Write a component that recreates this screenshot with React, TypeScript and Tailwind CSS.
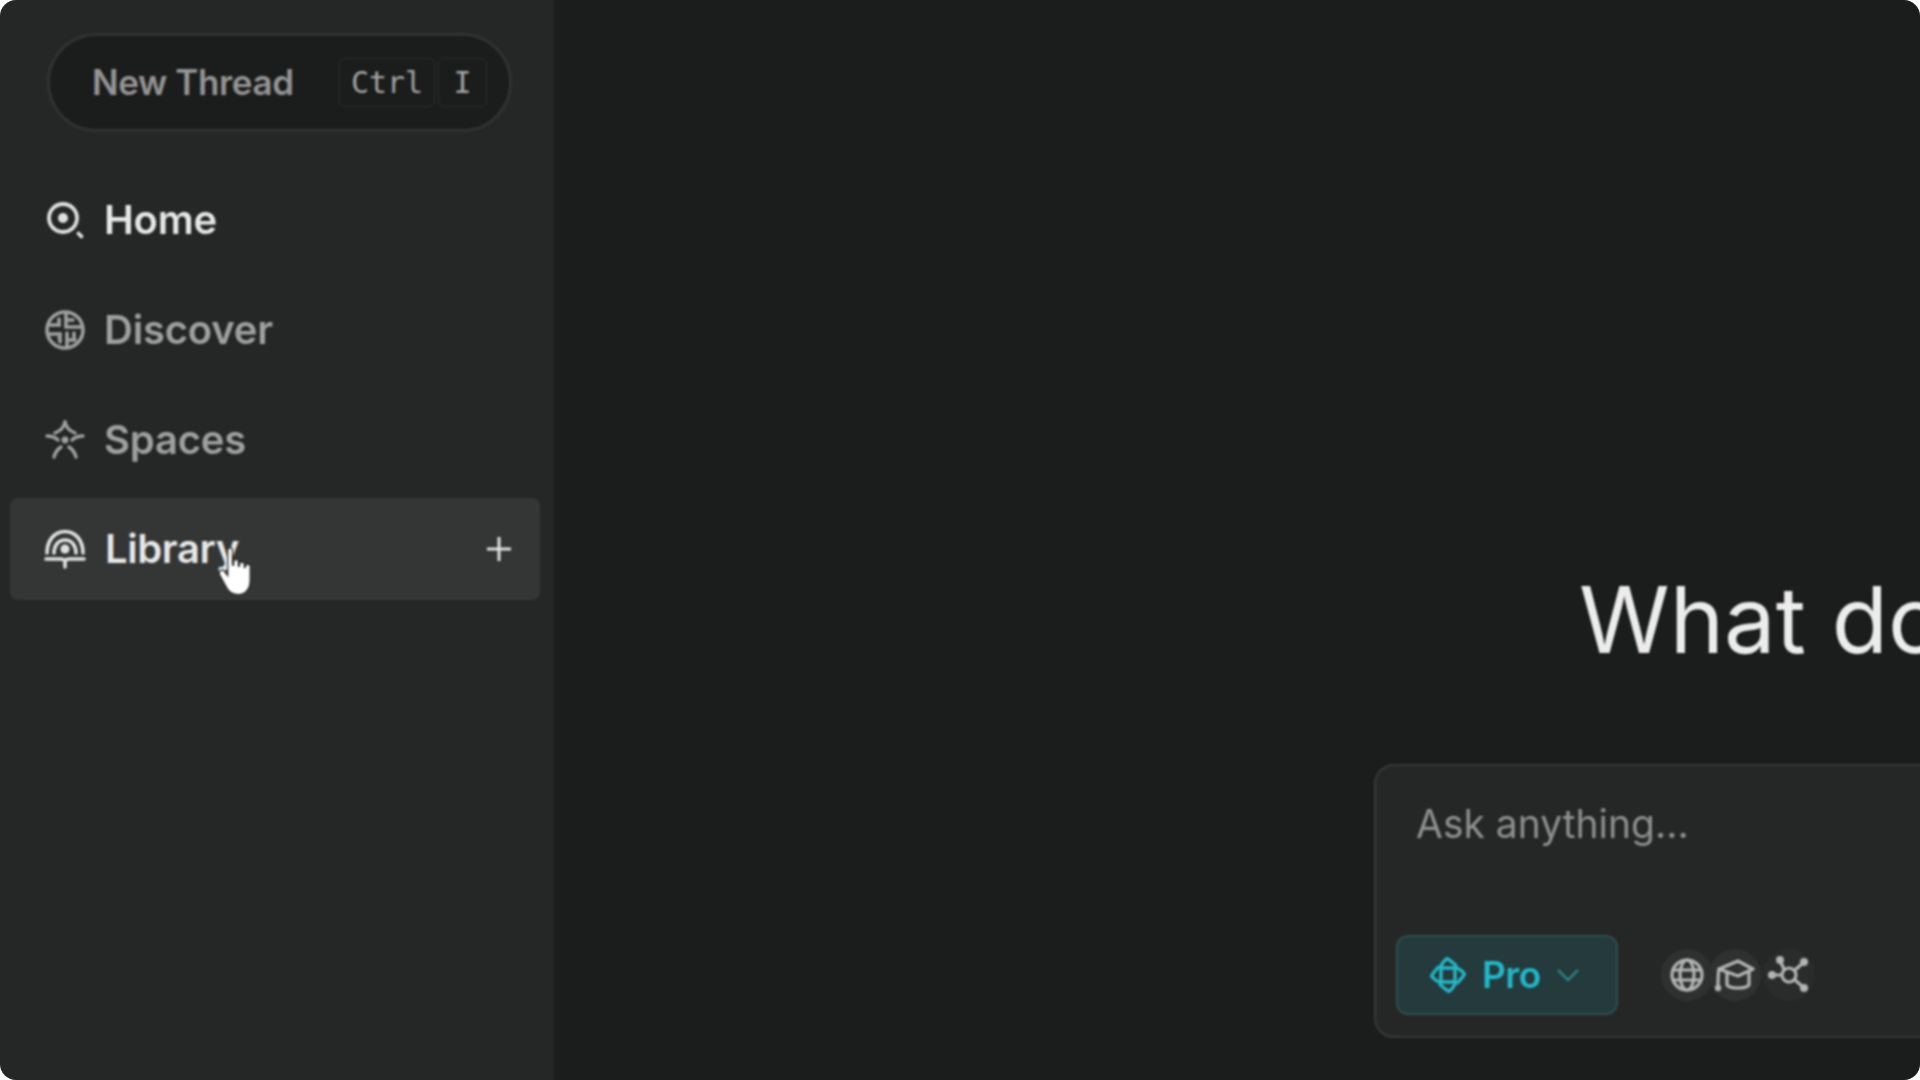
const inter = "font-['Inter',sans-serif]";

function HomeIcon() {
  return (
    <svg viewBox="0 0 40 40" className="w-10 h-10" fill="none" stroke="currentColor" strokeWidth="3.8" strokeLinecap="round">
      <circle cx="18" cy="18" r="14" />
      <circle cx="18" cy="18" r="5" fill="currentColor" stroke="none" />
      <path d="M33.5 33.5l3 3" />
    </svg>
  );
}

function DiscoverIcon() {
  return (
    <svg viewBox="0 0 40 40" className="w-10 h-10" fill="none" stroke="currentColor" strokeWidth="3.6" strokeLinecap="round">
      <circle cx="20" cy="20" r="18" />
      <path d="M4 15h10V9M21 3v14h15M21 10h7M4 24h11v8M15 28h-1M22 23v14M22 30h8M29 23v5" />
    </svg>
  );
}

function SpacesIcon() {
  return (
    <svg viewBox="0 0 40 40" className="w-10 h-10" fill="none" stroke="currentColor" strokeWidth="3.4" strokeLinecap="round">
      <path d="M20 2c-1 5-5 9-10 11" />
      <path d="M20 2c1 5 5 9 10 11" />
      <path d="M2 16c4 0 8 1 11 4" />
      <path d="M38 16c-4 0-8 1-11 4" />
      <path d="M9 37c1-4 4-8 7-10" />
      <path d="M31 37c-1-4-4-8-7-10" />
      <circle cx="20" cy="20" r="3.4" fill="currentColor" stroke="none" />
    </svg>
  );
}

function LibraryIcon() {
  return (
    <svg viewBox="0 0 44 40" className="w-11 h-10" fill="none" stroke="currentColor" strokeWidth="3.6" strokeLinecap="round">
      <path d="M4 24C4 12 11 2.500 22 2.500S40 12 40 24" />
      <path d="M11 24c0-7 4-13 11-13s11 6 11 13" />
      <circle cx="22" cy="20" r="4.500" fill="currentColor" stroke="none" />
      <path d="M3 30h14c3 0 5 1 5 3 0-2 2-3 5-3h14M22 33v5" />
    </svg>
  );
}

function ProIcon() {
  const petal = "M13 26V12.500C13 9 16 6 19 3.500C22 5 25 8 28 10.500";
  return (
    <svg viewBox="0 0 40 40" className="w-10 h-10" fill="none" stroke="currentColor" strokeWidth="3.4" strokeLinecap="round" strokeLinejoin="round">
      <path d={petal} />
      <path d={petal} transform="rotate(90 20 20)" />
      <path d={petal} transform="rotate(180 20 20)" />
      <path d={petal} transform="rotate(270 20 20)" />
    </svg>
  );
}

function GlobeIcon() {
  return (
    <svg viewBox="0 0 36 36" className="w-9 h-9" fill="none" stroke="currentColor" strokeWidth="3.2">
      <circle cx="18" cy="18" r="15" />
      <ellipse cx="18" cy="18" rx="7" ry="15" />
      <path d="M4 13h28M4 23h28" />
    </svg>
  );
}

function CapIcon() {
  return (
    <svg viewBox="0 0 40 36" className="w-10 h-9" fill="none" stroke="currentColor" strokeWidth="3.2" strokeLinecap="round" strokeLinejoin="round">
      <path d="M4 12L23 4l15 8-15 7z" />
      <path d="M4 12c-1 5-1 12-1 18" />
      <path d="M12 16v12c3 4 19 4 22 0V14" />
      <circle cx="3" cy="31" r="1.6" fill="currentColor" />
    </svg>
  );
}

function NetworkIcon() {
  return (
    <svg viewBox="0 0 44 40" className="w-11 h-10" fill="none" stroke="currentColor" strokeWidth="3.2">
      <circle cx="22" cy="20" r="7" />
      <path d="M17 14l-4-8M28 15l8-7M28 25l8 7M15 20H6" />
      <circle cx="13" cy="5" r="4" fill="currentColor" stroke="none" />
      <circle cx="37" cy="7" r="4" fill="currentColor" stroke="none" />
      <circle cx="37" cy="33" r="4" fill="currentColor" stroke="none" />
      <circle cx="5" cy="20" r="4" fill="currentColor" stroke="none" />
    </svg>
  );
}

function HandCursor() {
  return (
    <svg viewBox="0 0 32 44" className="w-[38px] h-[52px] absolute left-[207px] top-[47px]">
      <path
        d="M9 4c0-2 4-2 4 0v13l1 0V14c0-2 4-2 4 0v4h1v-2c0-2 4-2 4 0v3h1v-1c0-2 4-2 4 0v12c0 7-4 12-10 12-5 0-8-2-10-6L2 25c-1-3 2-5 4-3l3 4z"
        fill="#fff"
        stroke="#222"
        strokeWidth="1"
      />
    </svg>
  );
}

const rows = [
  { label: "Home", icon: <HomeIcon />, text: "text-[#e8e8e8]", ic: "text-[#e0e0e0]" },
  { label: "Discover", icon: <DiscoverIcon />, text: "text-[#a0a0a0]", ic: "text-[#a0a0a0]" },
  { label: "Spaces", icon: <SpacesIcon />, text: "text-[#a0a0a0]", ic: "text-[#a0a0a0]" },
];

export default function App() {
  return (
    <div className={`h-screen w-full bg-white overflow-hidden ${inter}`}>
      <div className="h-full flex rounded-[16px] overflow-hidden">
        <aside className="w-[555px] shrink-0 h-full bg-[#252727] border-r-2 border-[#1f2121] px-[10px] overflow-hidden">
          <div className="blur-[0.8px] pt-[33px]">
            <div className="ml-[37px] w-[465px] h-[99px] rounded-full bg-[#1b1c1c] border-[3px] border-[#313333] flex items-center pl-[42px]">
              <span className="text-[35px] font-semibold text-[#959595] tracking-[-0.4px] w-[207px] whitespace-nowrap">New Thread</span>
              <span className="ml-[40px] w-[96px] h-[49px] border border-[#2b2d2d] rounded-[6px] flex items-center justify-center font-['DejaVu_Sans_Mono',monospace] text-[30px] text-[#a4a4a4]">Ctrl</span>
              <span className="ml-[3px] w-[49px] h-[49px] border border-[#2b2d2d] rounded-[6px] flex items-center justify-center font-['DejaVu_Sans_Mono',monospace] text-[30px] text-[#a4a4a4]">I</span>
            </div>
            <nav className="mt-[33px]">
              {rows.map((r) => (
                <div key={r.label} className="h-[110px] flex items-center pl-[35px] gap-[19px]">
                  <span className={r.ic}>{r.icon}</span>
                  <span className={`text-[40px] font-semibold tracking-[-0.2px] ${r.text}`}>{r.label}</span>
                </div>
              ))}
              <div className="relative mt-[3px] h-[102px] w-[530px] rounded-[8px] bg-[#343636] flex items-center pl-[33px] gap-[18px]">
                <span className="text-[#e0e0e0]"><LibraryIcon /></span>
                <span className="text-[40px] font-semibold tracking-[-0.4px] text-[#e8e8e8]">Library</span>
                <span className="ml-auto mr-[28px] text-[#e0e0e0]">
                  <svg viewBox="0 0 26 26" className="w-[26px] h-[26px]" fill="none" stroke="currentColor" strokeWidth="3">
                    <path d="M13 1v24M1 13h24" />
                  </svg>
                </span>
                <HandCursor />
              </div>
            </nav>
          </div>
        </aside>
        <main className="flex-1 h-full bg-[#1b1c1c] overflow-hidden">
          <div className="blur-[0.8px] pl-[819px] pt-[565px]">
            <h1 className="ml-[205px] text-[92px] leading-[110px] font-normal text-[#ececec] whitespace-nowrap">What do you want to know?</h1>
            <div className="mt-[89px] w-[1400px] h-[274px] rounded-[20px] bg-[#252727] border-2 border-[#383a3a] pl-[20px] pt-[33px]">
              <div className="pl-[20px] text-[39px] leading-[50px] text-[#8f8f8f]">Ask anything...</div>
              <div className="mt-[86px] flex items-center">
                <div className="w-[222px] h-[80px] rounded-[12px] bg-[#243a3c] border-2 border-[#2f4d4f] flex items-center pl-[30px] text-[#22b8c8]">
                  <ProIcon />
                  <span className="ml-[14px] text-[37px] font-semibold tracking-[-0.5px]">Pro</span>
                  <svg viewBox="0 0 24 14" className="ml-[15px] w-6 h-[14px] text-[#2f7f80]" fill="none" stroke="currentColor" strokeWidth="2.6">
                    <path d="M2 2l10 10L22 2" />
                  </svg>
                </div>
                <div className="ml-[43px] flex items-center text-[#b4b4b4]">
                  <span className="w-[52px] h-[52px] rounded-full bg-[#2f3131] flex items-center justify-center"><GlobeIcon /></span>
                  <span className="w-[52px] h-[52px] -ml-[4px] rounded-full bg-[#2f3131] flex items-center justify-center"><CapIcon /></span>
                  <span className="w-[52px] h-[52px] ml-[2px] rounded-full bg-[#2a2c2c] flex items-center justify-center"><NetworkIcon /></span>
                </div>
              </div>
            </div>
          </div>
        </main>
      </div>
    </div>
  );
}
